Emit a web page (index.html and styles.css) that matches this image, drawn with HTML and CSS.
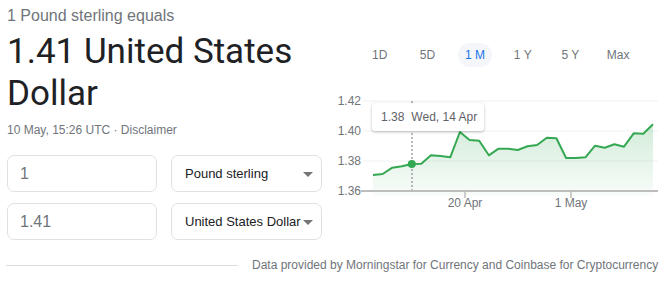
FILE: index.html
```html
<!DOCTYPE html>
<html lang="en">
<head>
<meta charset="utf-8">
<title>Currency converter</title>
<link rel="stylesheet" href="styles.css">
</head>
<body>
<div class="page">
  <div class="main">
    <div class="left">
      <div class="equals">1 Pound sterling equals</div>
      <div class="result">1.41 United States Dollar</div>
      <div class="meta">10 May, 15:26 UTC · Disclaimer</div>
      <div class="conv">
        <div class="row">
          <div class="field">1</div>
          <div class="select"><span>Pound sterling</span><span class="arrow"></span></div>
        </div>
        <div class="row">
          <div class="field">1.41</div>
          <div class="select"><span>United States Dollar</span><span class="arrow"></span></div>
        </div>
      </div>
    </div>
    <div class="right">
      <div class="ranges">
        <span class="rng">1D</span>
        <span class="rng">5D</span>
        <span class="rng active">1 M</span>
        <span class="rng">1 Y</span>
        <span class="rng">5 Y</span>
        <span class="rng">Max</span>
      </div>
      <div class="chart">
        <svg class="plot" width="333" height="125" viewBox="0 0 333 125">
          <defs>
            <linearGradient id="fillg" x1="0" y1="0" x2="0" y2="1">
              <stop offset="0" stop-color="#34a853" stop-opacity="0.22"/>
              <stop offset="1" stop-color="#34a853" stop-opacity="0.03"/>
            </linearGradient>
          </defs>
          <line x1="30" y1="11" x2="325" y2="11" stroke="#f1f1f1" stroke-width="1"/>
          <line x1="30" y1="41" x2="325" y2="41" stroke="#f1f1f1" stroke-width="1"/>
          <line x1="30" y1="71" x2="325" y2="71" stroke="#f1f1f1" stroke-width="1"/>
          <polygon fill="url(#fillg)" points="40,85 49.66,84 59.31,77.7 68.97,76.3 78.62,74 88.28,73.7 97.93,65.3 107.59,66 117.24,67.3 126.9,42 136.55,50 146.2,50.7 155.86,65.3 165.5,58.7 175.17,58.7 184.8,60 194.5,56.3 204.1,55 213.8,47.7 223.4,48.3 233.1,68 242.8,68 252.4,67.3 262.1,55.7 271.7,57.7 281.4,54.3 291,56.7 300.7,43.3 310.3,43.7 320,34.3 320,106 40,106"/>
          <line x1="28" y1="101" x2="325" y2="101" stroke="#bdbdbd" stroke-width="2"/>
          <line x1="132" y1="101" x2="132" y2="108" stroke="#bdbdbd" stroke-width="1.5"/>
          <line x1="238" y1="101" x2="238" y2="108" stroke="#bdbdbd" stroke-width="1.5"/>
          <line x1="79" y1="11" x2="79" y2="100" stroke="#70757a" stroke-width="1" stroke-dasharray="2,2"/>
          <polyline fill="none" stroke="#34a853" stroke-width="2" stroke-linejoin="round" points="40,85 49.66,84 59.31,77.7 68.97,76.3 78.62,74 88.28,73.7 97.93,65.3 107.59,66 117.24,67.3 126.9,42 136.55,50 146.2,50.7 155.86,65.3 165.5,58.7 175.17,58.7 184.8,60 194.5,56.3 204.1,55 213.8,47.7 223.4,48.3 233.1,68 242.8,68 252.4,67.3 262.1,55.7 271.7,57.7 281.4,54.3 291,56.7 300.7,43.3 310.3,43.7 320,34.3"/>
          <circle cx="78.8" cy="74" r="4" fill="#34a853"/>
          <g class="lbl">
            <text x="28" y="15.3" text-anchor="end">1.42</text>
            <text x="28" y="45.3" text-anchor="end">1.40</text>
            <text x="28" y="75.3" text-anchor="end">1.38</text>
            <text x="28" y="105.3" text-anchor="end">1.36</text>
            <text x="132" y="117" text-anchor="middle">20 Apr</text>
            <text x="238" y="117" text-anchor="middle">1 May</text>
          </g>
        </svg>
        <div class="tip"><span class="tip-val">1.38</span><span class="tip-date">Wed, 14 Apr</span></div>
      </div>
    </div>
  </div>
  <div class="footer">
    <div class="rule"></div>
    <div class="source">Data provided by Morningstar for Currency and Coinbase for Cryptocurrency</div>
  </div>
</div>
</body>
</html>
```

FILE: styles.css
```css
* { box-sizing: border-box; }
html, body { margin: 0; padding: 0; background: #fff; }
body { font-family: "Liberation Sans", Arial, sans-serif; color: #202124; }
.page { width: 666px; padding-top: 6px; }
.main { display: grid; grid-template-columns: 333px 333px; }
.left { padding-left: 7px; padding-right: 10px; }
.equals { font-size: 16px; line-height: 20px; color: #70757a; }
.result { margin-top: 5px; font-family: Roboto, "Liberation Sans", sans-serif; font-size: 35px; line-height: 42px; color: #202124; width: 300px; }
.meta { margin-top: 7px; font-size: 12px; line-height: 16px; color: #70757a; }
.conv { margin-top: 17px; display: flex; flex-direction: column; gap: 11px; }
.row { display: flex; gap: 14px; }
.field { width: 150px; height: 37px; border: 1px solid #dfe1e5; border-radius: 7px; padding-left: 12px; display: flex; align-items: center; font-size: 16px; color: #70757a; }
.select { width: 151px; height: 37px; border: 1px solid #dfe1e5; border-radius: 7px; padding: 0 8px 0 13px; display: flex; align-items: center; justify-content: space-between; font-size: 13px; color: #202124; }
.arrow { width: 0; height: 0; border-left: 5px solid transparent; border-right: 5px solid transparent; border-top: 5px solid #757575; margin-top: 1px; }
.right { padding-top: 37px; }
.ranges { display: flex; gap: 13.7px; margin-left: 29.7px; }
.rng { width: 34px; height: 24px; border-radius: 12px; display: flex; align-items: center; justify-content: center; font-size: 12px; color: #70757a; }
.rng.active { background: #f4f6fa; color: #1a73e8; }
.chart { position: relative; margin-top: 23px; height: 125px; }
.plot { display: block; }
.lbl text { font-family: "Liberation Sans", Arial, sans-serif; font-size: 12px; fill: #70757a; }
.tip { position: absolute; left: 39px; top: 13px; width: 112px; height: 28px; background: #fff; border-radius: 3px; box-shadow: 0 1px 3px rgba(0,0,0,0.28); display: flex; align-items: center; padding-left: 9px; font-size: 12px; color: #5f6368; }
.tip-val { margin-right: 7px; }
.footer { display: flex; align-items: center; margin-top: 17px; padding-left: 6px; }
.rule { width: 232px; height: 1px; background: #dadce0; }
.source { margin-left: 14px; font-size: 12px; line-height: 16px; color: #70757a; white-space: nowrap; }
```
